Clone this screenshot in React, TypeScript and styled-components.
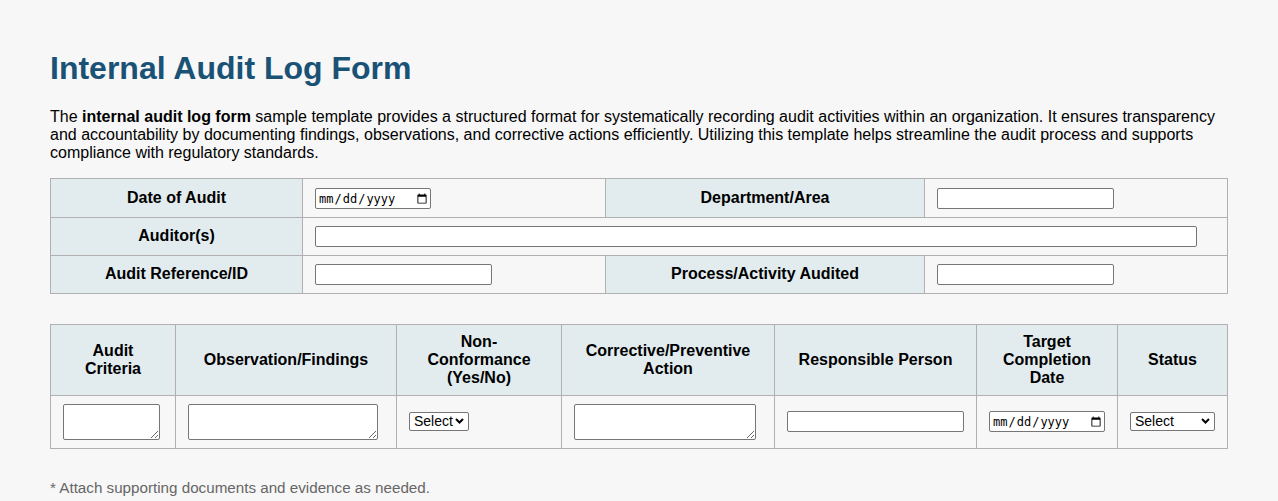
import React from "react";
import styled, { createGlobalStyle } from "styled-components";

const Global = createGlobalStyle`
  html, body { margin: 0; padding: 0; background: #f7f7f7; }
  body { font-family: "Liberation Sans", Arial, sans-serif; color: #000; font-size: 16px; line-height: 18px; }
`;

const Page = styled.main`
  padding: 50px 50px 0;
  height: 501px;
  box-sizing: border-box;
  overflow: hidden;
`;

const Title = styled.h1`
  margin: 0 0 22px;
  font-size: 32px;
  line-height: 36px;
  font-weight: 700;
  color: #1a5276;
`;

const Intro = styled.p`
  margin: 0 0 16px;
`;

const Table = styled.table<{ $gap?: number }>`
  width: 1177px;
  border-collapse: collapse;
  table-layout: fixed;
  margin-bottom: ${(p) => p.$gap ?? 0}px;
`;

const Head = styled.th<{ $h?: number; $lift?: boolean }>`
  background: #e2ecef;
  border: 1px solid #b0b0b0;
  padding: ${(p) => (p.$lift ? "7px 12px 9px" : "8px 12px")};
  font-weight: 700;
  text-align: center;
  height: ${(p) => p.$h ?? 18}px;
  box-sizing: content-box;
`;

const Cell = styled.td<{ $lift?: boolean }>`
  border: 1px solid #b0b0b0;
  padding: ${(p) => (p.$lift ? "7px 12px 9px" : "8px 12px")};
  vertical-align: middle;
`;

const fieldBase = `
  box-sizing: border-box;
  display: block;
  background-color: #fff;
  border: 1px solid #767676;
  border-radius: 2px;
  margin: 0;
  color: #000;
`;

const TextField = styled.input<{ $w: number }>`
  ${fieldBase}
  width: ${(p) => p.$w}px;
  height: 21px;
  padding: 1px 2px;
  font: 13.33px "Liberation Sans", sans-serif;
`;

const DateField = styled.input<{ $w: number }>`
  ${fieldBase}
  width: ${(p) => p.$w}px;
  height: 21px;
  padding: 2px 0 0 2px;
  font: 12px "DejaVu Sans Mono", monospace;
`;

const TextArea = styled.textarea<{ $w: number }>`
  ${fieldBase}
  width: ${(p) => p.$w}px;
  height: 36px;
  padding: 2px;
  font: 13.33px "Liberation Sans", sans-serif;
`;

const Select = styled.select<{ $w: number }>`
  ${fieldBase}
  appearance: none;
  width: ${(p) => p.$w}px;
  height: 19px;
  padding: 0 0 0 4px;
  font: 14px "Liberation Sans", sans-serif;
  background-image: url("data:image/svg+xml,%3Csvg xmlns='http://www.w3.org/2000/svg' width='9' height='6' viewBox='0 0 9 6'%3E%3Cpath d='M1 1l3.5 3.5L8 1' fill='none' stroke='%23000' stroke-width='2'/%3E%3C/svg%3E");
  background-repeat: no-repeat;
  background-position: right 4px center;
`;

const Note = styled.p`
  margin: 30px 0 0;
  font-size: 15.2px;
  color: #666;
`;

const Col = styled.col<{ $w: number }>`
  width: ${(p) => p.$w}px;
`;

const Options = () => (
  <>
    <option>Select</option>
    <option>Yes</option>
    <option>No</option>
  </>
);

export default function App() {
  return (
    <Page>
      <Global />
      <Title>Internal Audit Log Form</Title>
      <Intro>
        The <strong>internal audit log form</strong> sample template provides a structured format for systematically
        recording audit activities within an organization. It ensures transparency and accountability by documenting
        findings, observations, and corrective actions efficiently. Utilizing this template helps streamline the audit
        process and supports compliance with regulatory standards.
      </Intro>
      <Table $gap={30}>
        <colgroup>
          <Col $w={252} />
          <Col $w={303} />
          <Col $w={319} />
          <Col $w={303} />
        </colgroup>
        <tbody>
          <tr>
            <Head $h={22}>Date of Audit</Head>
            <Cell><DateField type="date" $w={116} /></Cell>
            <Head $h={22}>Department/Area</Head>
            <Cell><TextField $w={177} /></Cell>
          </tr>
          <tr>
            <Head $h={21} $lift>Auditor(s)</Head>
            <Cell colSpan={3}><TextField $w={882} /></Cell>
          </tr>
          <tr>
            <Head $h={21} $lift>Audit Reference/ID</Head>
            <Cell><TextField $w={177} /></Cell>
            <Head $h={21} $lift>Process/Activity Audited</Head>
            <Cell><TextField $w={177} /></Cell>
          </tr>
        </tbody>
      </Table>
      <Table>
        <colgroup>
          <Col $w={125} />
          <Col $w={221} />
          <Col $w={165} />
          <Col $w={213} />
          <Col $w={202} />
          <Col $w={141} />
          <Col $w={110} />
        </colgroup>
        <thead>
          <tr>
            <Head>Audit Criteria</Head>
            <Head>Observation/Findings</Head>
            <Head>Non-<br />Conformance (Yes/No)</Head>
            <Head>Corrective/Preventive Action</Head>
            <Head>Responsible Person</Head>
            <Head>Target Completion Date</Head>
            <Head>Status</Head>
          </tr>
        </thead>
        <tbody>
          <tr>
            <Cell><TextArea $w={97} /></Cell>
            <Cell><TextArea $w={190} /></Cell>
            <Cell $lift><Select $w={60}><Options /></Select></Cell>
            <Cell><TextArea $w={182} /></Cell>
            <Cell $lift><TextField $w={177} /></Cell>
            <Cell $lift><DateField type="date" $w={116} /></Cell>
            <Cell $lift><Select $w={85}><Options /></Select></Cell>
          </tr>
        </tbody>
      </Table>
      <Note>* Attach supporting documents and evidence as needed.</Note>
    </Page>
  );
}
